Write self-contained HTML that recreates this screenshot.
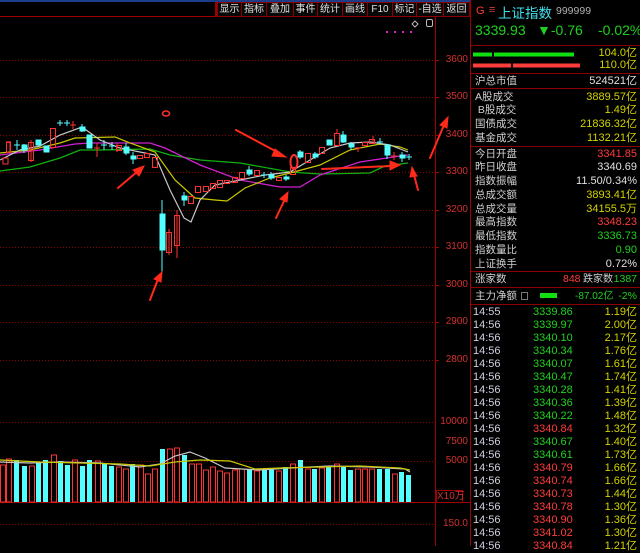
<!DOCTYPE html>
<html><head><meta charset="utf-8"><style>
*{margin:0;padding:0;box-sizing:border-box}
body{width:640px;height:546px;background:#000;overflow:hidden;position:relative;font-family:"Liberation Sans","Noto Sans CJK SC",sans-serif}
.ab{position:absolute;white-space:nowrap}
.btn{position:absolute;top:2px;height:15px;border:1px solid #8a0000;color:#e0e0e0;font-size:10px;line-height:13px;text-align:center;background:#080808}
.r{position:absolute;left:471px;width:169px;height:13px;font-size:11px;line-height:13px;color:#d0d0d0}
.r .l{position:absolute;left:4px;font-size:10.5px}
.r .v{position:absolute;right:3px}
.y{color:#d2d200}.rd{color:#ff3c3c}.g{color:#20d020}.w{color:#e0e0e0}
.ax{position:absolute;right:172px;font-size:10px;color:#d23030;line-height:10px}
.t{position:absolute;left:473px;width:167px;height:13px;font-size:11px;line-height:13px}
.t .a{position:absolute;left:0;color:#d0d0e0}
.t .b{position:absolute;left:60px}
.t .c{position:absolute;right:3px;color:#d2d200}
</style></head><body>
<div class="ab" style="left:0;top:0;width:470px;height:2px;background:#1c3c8c"></div>
<div class="ab" style="left:0;top:16px;width:470px;height:1px;background:#a00000"></div>
<div class="ab" style="left:215px;top:2px;width:2px;height:14px;background:#a00000"></div>
<div class="btn" style="left:217px;width:25px">显示</div>
<div class="btn" style="left:241px;width:26px">指标</div>
<div class="btn" style="left:266px;width:28px">叠加</div>
<div class="btn" style="left:293px;width:25px">事件</div>
<div class="btn" style="left:317px;width:26px">统计</div>
<div class="btn" style="left:342px;width:26px">画线</div>
<div class="btn" style="left:367px;width:26px">F10</div>
<div class="btn" style="left:392px;width:25px">标记</div>
<div class="btn" style="left:416px;width:28px">-自选</div>
<div class="btn" style="left:443px;width:27px">返回</div>

<svg class="ab" style="left:0;top:0" width="640" height="546">
<g stroke="#8a0000" stroke-dasharray="1,2" stroke-width="1">
<line x1="0" y1="60.5" x2="435" y2="60.5"/><line x1="0" y1="97.5" x2="435" y2="97.5"/>
<line x1="0" y1="135.5" x2="435" y2="135.5"/><line x1="0" y1="172.5" x2="435" y2="172.5"/>
<line x1="0" y1="210.5" x2="435" y2="210.5"/><line x1="0" y1="247.5" x2="435" y2="247.5"/>
<line x1="0" y1="285.5" x2="435" y2="285.5"/><line x1="0" y1="322.5" x2="435" y2="322.5"/>
<line x1="0" y1="360.5" x2="435" y2="360.5"/><line x1="0" y1="422.5" x2="435" y2="422.5"/>
<line x1="0" y1="461.5" x2="435" y2="461.5"/><line x1="0" y1="524.5" x2="435" y2="524.5"/>
</g>
<g stroke="#a00000" stroke-width="1">
<line x1="435.5" y1="17" x2="435.5" y2="546"/>
<line x1="470.5" y1="0" x2="470.5" y2="546"/>
<line x1="0" y1="502.5" x2="470" y2="502.5"/>
<line x1="435" y1="60.5" x2="439" y2="60.5"/><line x1="435" y1="97.5" x2="439" y2="97.5"/><line x1="435" y1="135.5" x2="439" y2="135.5"/><line x1="435" y1="172.5" x2="439" y2="172.5"/><line x1="435" y1="210.5" x2="439" y2="210.5"/><line x1="435" y1="247.5" x2="439" y2="247.5"/><line x1="435" y1="285.5" x2="439" y2="285.5"/><line x1="435" y1="322.5" x2="439" y2="322.5"/><line x1="435" y1="360.5" x2="439" y2="360.5"/>
</g>
<rect x="436.5" y="490.5" width="26" height="12" fill="none" stroke="#a00000"/>
<g stroke="#8a0000"><line x1="471" y1="45.5" x2="640" y2="45.5"/><line x1="471" y1="73.5" x2="640" y2="73.5"/><line x1="471" y1="88.5" x2="640" y2="88.5"/><line x1="471" y1="146.5" x2="640" y2="146.5"/><line x1="471" y1="271.5" x2="640" y2="271.5"/><line x1="471" y1="287.5" x2="640" y2="287.5"/><line x1="471" y1="304.5" x2="640" y2="304.5"/></g>
<rect x="473" y="52.5" width="19" height="4" fill="#10e010"/><rect x="494" y="52.5" width="80" height="4" fill="#10e010"/>
<rect x="473" y="63.5" width="38" height="4" fill="#ff3c3c"/><rect x="513" y="63.5" width="67" height="4" fill="#ff3c3c"/>
<rect x="540" y="293" width="17" height="5" fill="#10e010"/>
<rect x="521.5" y="292.5" width="6" height="7" fill="none" stroke="#777"/>

<g stroke="#ff3232" fill="none" stroke-width="1">
<rect x="0.5" y="465" width="5" height="37"/><rect x="6.5" y="459" width="5" height="43"/><rect x="29.5" y="466" width="5" height="36"/>
<rect x="51.5" y="455" width="5" height="47"/><rect x="72.5" y="460" width="5" height="42"/><rect x="95.5" y="461" width="5" height="41"/>
<rect x="116.5" y="467" width="5" height="35"/><rect x="123.5" y="469" width="5" height="33"/>
<rect x="138.5" y="465" width="5" height="37"/><rect x="145.5" y="474" width="5" height="28"/><rect x="152.5" y="469" width="5" height="33"/>
<rect x="167.5" y="449" width="5" height="53"/><rect x="174.5" y="448" width="5" height="54"/>
<rect x="189.5" y="464" width="5" height="38"/><rect x="196.5" y="464" width="5" height="38"/><rect x="203.5" y="470" width="5" height="32"/>
<rect x="210.5" y="467" width="5" height="35"/><rect x="217.5" y="471" width="5" height="31"/><rect x="224.5" y="473" width="5" height="29"/>
<rect x="232.5" y="470" width="5" height="32"/><rect x="239.5" y="469" width="5" height="33"/><rect x="254.5" y="471" width="5" height="31"/>
<rect x="276.5" y="471" width="5" height="31"/><rect x="290.5" y="464" width="5" height="38"/><rect x="305.5" y="469" width="5" height="33"/>
<rect x="319.5" y="468" width="5" height="34"/><rect x="334.5" y="464" width="5" height="38"/><rect x="355.5" y="469" width="5" height="33"/>
<rect x="362.5" y="469" width="5" height="33"/><rect x="369.5" y="469" width="5" height="33"/><rect x="392.5" y="474" width="5" height="28"/>
</g>
<g fill="#54ffff">
<rect x="14" y="460" width="5" height="42"/><rect x="22" y="466" width="5" height="36"/><rect x="36" y="462" width="5" height="40"/>
<rect x="43" y="460" width="5" height="42"/><rect x="58" y="461" width="5" height="41"/><rect x="65" y="465" width="5" height="37"/>
<rect x="80" y="466" width="5" height="36"/><rect x="87" y="460" width="5" height="42"/><rect x="102" y="464" width="5" height="38"/>
<rect x="109" y="466" width="5" height="36"/><rect x="130" y="464" width="5" height="38"/>
<rect x="160" y="449" width="5" height="53"/><rect x="182" y="455" width="5" height="47"/>
<rect x="247" y="469" width="5" height="33"/><rect x="262" y="469" width="5" height="33"/><rect x="269" y="469" width="5" height="33"/>
<rect x="283" y="467" width="5" height="35"/><rect x="298" y="460" width="5" height="42"/><rect x="312" y="469" width="5" height="33"/>
<rect x="326" y="467" width="5" height="35"/><rect x="341" y="467" width="5" height="35"/><rect x="348" y="470" width="5" height="32"/>
<rect x="377" y="469" width="5" height="33"/><rect x="385" y="469" width="5" height="33"/><rect x="399" y="472" width="5" height="30"/>
<rect x="406" y="475" width="5" height="27"/>
</g>
<polyline fill="none" stroke="#c8c8c8" stroke-width="1.2" points="0,462 30,463 60,462 100,463 140,467 160,464 175,456 190,452 205,458 225,468 260,470 290,468 330,466 370,467 405,469 410,472"/>
<polyline fill="none" stroke="#c8c800" stroke-width="1.2" points="0,460 40,462 80,463 120,464 150,466 175,462 200,460 230,461 255,469 280,468 320,467 360,466 400,468 410,470"/>

<polyline fill="none" stroke="#10b010" stroke-width="1.3" points="0,171 30,167 60,158 80,150 100,150 150,149 170,155 200,160 240,163 290,172 320,174 370,173 385,166 408,163"/>
<polyline fill="none" stroke="#d020d0" stroke-width="1.3" points="0,155 40,150 75,144 90,143 150,143 165,148 200,165 240,180 280,187 300,187 320,175 360,162 400,156 408,155"/>
<polyline fill="none" stroke="#c8c800" stroke-width="1.2" points="0,153 30,150 60,143 75,138 115,137 130,143 155,152 175,180 195,198 215,200 227,201 245,188 270,178 290,173 320,165 350,150 380,144 400,147 408,150"/>
<polyline fill="none" stroke="#c8c8c8" stroke-width="1.2" points="0,160 20,150 40,146 60,135 82,127 100,140 120,148 140,152 155,155 170,190 184,218 191,222 200,200 215,185 240,180 265,175 290,172 310,160 330,148 350,143 370,142 390,145 408,152"/>

<g stroke="#ff3232" fill="none" stroke-width="1">
<path d="M3 158h5v6h-5z M10 141v12 M6 142h4 M31 140v22"/>
<rect x="6.5" y="142.5" width="4" height="10"/><rect x="28.5" y="142.5" width="5" height="18"/>
<rect x="50.5" y="128.5" width="5" height="19"/><path d="M73 121v8 M70 125h6 M97 143v14 M94 148h6 M117 143v9"/>
<rect x="116.5" y="145.5" width="5" height="5"/><rect x="137.5" y="155.5" width="5" height="3"/><rect x="144.5" y="153.5" width="5" height="4"/>
<rect x="152.5" y="157.5" width="5" height="10"/><rect x="166.5" y="232.5" width="5" height="20"/><path d="M169 229v26 M177 210v48"/>
<rect x="174.5" y="215.5" width="5" height="30"/><rect x="188.5" y="196.5" width="5" height="7"/><rect x="195.5" y="186.5" width="5" height="6"/>
<rect x="203.5" y="186.5" width="5" height="5"/><rect x="210.5" y="183.5" width="5" height="5"/><rect x="217.5" y="180.5" width="5" height="7"/>
<rect x="224.5" y="180.5" width="5" height="3"/><rect x="232.5" y="177.5" width="5" height="5"/><rect x="239.5" y="172.5" width="5" height="6"/>
<rect x="254.5" y="170.5" width="5" height="5"/><rect x="276.5" y="177.5" width="5" height="3"/><rect x="290.5" y="167.5" width="5" height="7"/>
<rect x="305.5" y="153.5" width="5" height="9"/><rect x="319.5" y="147.5" width="5" height="6"/><rect x="334.5" y="133.5" width="5" height="12"/>
<path d="M337 129v5 M358 147v5 M355 148h6 M373 136v8 M394 152v8 M391 156h6"/>
<rect x="362.5" y="142.5" width="5" height="3"/><rect x="369.5" y="139.5" width="5" height="4"/>
</g>
<g fill="#54ffff" stroke="#54ffff" stroke-width="1">
<path d="M17 140v10 M14 145h6 M24 144v9 M60 120v6 M57 123h6 M67 120v6 M64 123h6 M82 124v8 M104 140v10 M101 145h6 M112 142v8 M109 146h6 M126 143v12 M133 152v12 M162 200v72 M184 192v14 M249 166v10 M264 172v6 M261 175h6 M271 172v8 M286 175v6 M300 150v9 M315 152v7 M343 131v12 M351 142v8 M380 138v7 M377 142h6 M387 145v14 M402 152v10 M409 154v6 M406 157h6"/>
<rect x="22" y="145" width="5" height="5"/><rect x="36" y="140" width="5" height="5"/><rect x="44" y="146" width="5" height="6"/>
<rect x="80" y="127" width="5" height="4"/><rect x="87" y="135" width="5" height="13"/><rect x="124" y="147" width="5" height="6"/>
<rect x="131" y="156" width="5" height="3"/><rect x="160" y="214" width="5" height="36"/><rect x="182" y="196" width="5" height="4"/>
<rect x="247" y="170" width="5" height="4"/><rect x="269" y="175" width="5" height="3"/><rect x="284" y="177" width="5" height="2"/>
<rect x="298" y="152" width="5" height="5"/><rect x="313" y="154" width="5" height="3"/><rect x="327" y="140" width="5" height="5"/>
<rect x="341" y="135" width="5" height="7"/><rect x="349" y="144" width="5" height="3"/><rect x="385" y="145" width="5" height="10"/>
<rect x="400" y="155" width="5" height="3"/>
</g>
<ellipse cx="166" cy="113.5" rx="3.5" ry="2.5" fill="none" stroke="#ff3030" stroke-width="1.5"/>
<ellipse cx="294" cy="162" rx="3.5" ry="7" fill="none" stroke="#ff3030" stroke-width="2"/>
<g fill="#ff2a1a" stroke="#ff2a1a" stroke-width="2" stroke-linecap="round">
<line x1="118" y1="188" x2="138" y2="171"/><polygon points="144,166 133,170 139,176" stroke-width="1"/>
<line x1="236" y1="130" x2="279" y2="153"/><polygon points="286,157 275,149 272,156" stroke-width="1"/>
<line x1="276" y1="218" x2="285" y2="199"/><polygon points="288,192 280,199 287,202" stroke-width="1"/>
<line x1="150" y1="300" x2="158" y2="279"/><polygon points="162,272 154,279 161,282" stroke-width="1"/>
<line x1="322" y1="169" x2="392" y2="166"/><polygon points="400,165 390,161 390,170" stroke-width="1"/>
<line x1="418" y1="190" x2="414" y2="175"/><polygon points="412,167 410,177 417,176" stroke-width="1"/>
<line x1="430" y1="158" x2="444" y2="125"/><polygon points="448,117 440,125 447,128" stroke-width="1"/>
</g>
<g fill="#e020e0"><rect x="386" y="31" width="2" height="2"/><rect x="394" y="31" width="2" height="2"/><rect x="402" y="31" width="2" height="2"/><rect x="410" y="31" width="2" height="2"/></g>
<path d="M415 21l3 3-3 3-3-3z" fill="none" stroke="#bbb"/>
<rect x="426.5" y="19.5" width="6" height="7" rx="1.5" fill="none" stroke="#bbb"/>
</svg>

<div class="ax" style="top:55px">3600</div><div class="ax" style="top:92px">3500</div><div class="ax" style="top:130px">3400</div>
<div class="ax" style="top:167px">3300</div><div class="ax" style="top:205px">3200</div><div class="ax" style="top:242px">3100</div>
<div class="ax" style="top:280px">3000</div><div class="ax" style="top:317px">2900</div><div class="ax" style="top:355px">2800</div>
<div class="ax" style="top:417px">10000</div><div class="ax" style="top:437px">7500</div><div class="ax" style="top:456px">5000</div>
<div class="ax" style="top:519px">150.0</div>
<div class="ab" style="left:437px;top:491px;font-size:10px;color:#d23030;line-height:11px">X10万</div>

<div class="ab" style="left:476px;top:5px;font-size:11px;color:#ff3c3c">G</div>
<div class="ab" style="left:489px;top:4px;font-size:11px;color:#cc4040">≡</div>
<div class="ab" style="left:498px;top:2px;font-size:13.5px;color:#40e0f0">上证指数</div>
<div class="ab" style="left:556px;top:5px;font-size:10.5px;color:#b0b0b0">999999</div>
<div class="ab" style="left:475px;top:22px;font-size:14px;color:#20d020">3339.93</div>
<div class="ab" style="left:537px;top:22px;font-size:14px;color:#20d020">▼-0.76</div>
<div class="ab" style="left:598px;top:22px;font-size:14px;color:#20d020">-0.02%</div>
<div class="r" style="top:47px"><span class="v y">104.0亿</span></div>
<div class="r" style="top:59px"><span class="v y">110.0亿</span></div>
<div class="r" style="top:75px"><span class="l">沪总市值</span><span class="v w">524521亿</span></div>
<div class="r" style="top:91px"><span class="l">A股成交</span><span class="v y">3889.57亿</span></div>
<div class="r" style="top:104px"><span class="l">&nbsp;B股成交</span><span class="v y">1.49亿</span></div>
<div class="r" style="top:118px"><span class="l">国债成交</span><span class="v y">21836.32亿</span></div>
<div class="r" style="top:132px"><span class="l">基金成交</span><span class="v y">1132.21亿</span></div>
<div class="r" style="top:148px"><span class="l">今日开盘</span><span class="v rd">3341.85</span></div>
<div class="r" style="top:161px"><span class="l">昨日收盘</span><span class="v w">3340.69</span></div>
<div class="r" style="top:175px"><span class="l">指数振幅</span><span class="v w">11.50/0.34%</span></div>
<div class="r" style="top:189px"><span class="l">总成交额</span><span class="v y">3893.41亿</span></div>
<div class="r" style="top:203px"><span class="l">总成交量</span><span class="v y">34155.5万</span></div>
<div class="r" style="top:216px"><span class="l">最高指数</span><span class="v rd">3348.23</span></div>
<div class="r" style="top:230px"><span class="l">最低指数</span><span class="v g">3336.73</span></div>
<div class="r" style="top:244px"><span class="l">指数量比</span><span class="v g">0.90</span></div>
<div class="r" style="top:258px"><span class="l">上证换手</span><span class="v w">0.72%</span></div>
<div class="r" style="top:273px"><span class="l">涨家数</span><span style="position:absolute;left:92px;color:#ff3c3c;font-size:10.5px">848</span><span style="position:absolute;left:112px;font-size:10px">跌家数</span><span class="v g" style="font-size:10.5px">1387</span></div>
<div class="r" style="top:290px"><span class="l">主力净额</span><span style="position:absolute;left:104px;font-size:10px" class="g">-87.02亿</span><span class="v g" style="font-size:10.5px">-2%</span></div>

<div class="t" style="top:306px"><span class="a">14:55</span><span class="b g">3339.86</span><span class="c">1.19亿</span></div>
<div class="t" style="top:319px"><span class="a">14:56</span><span class="b g">3339.97</span><span class="c">2.00亿</span></div>
<div class="t" style="top:332px"><span class="a">14:56</span><span class="b g">3340.10</span><span class="c">2.17亿</span></div>
<div class="t" style="top:345px"><span class="a">14:56</span><span class="b g">3340.34</span><span class="c">1.76亿</span></div>
<div class="t" style="top:358px"><span class="a">14:56</span><span class="b g">3340.07</span><span class="c">1.61亿</span></div>
<div class="t" style="top:371px"><span class="a">14:56</span><span class="b g">3340.47</span><span class="c">1.74亿</span></div>
<div class="t" style="top:384px"><span class="a">14:56</span><span class="b g">3340.28</span><span class="c">1.41亿</span></div>
<div class="t" style="top:397px"><span class="a">14:56</span><span class="b g">3340.36</span><span class="c">1.39亿</span></div>
<div class="t" style="top:410px"><span class="a">14:56</span><span class="b g">3340.22</span><span class="c">1.48亿</span></div>
<div class="t" style="top:423px"><span class="a">14:56</span><span class="b rd">3340.84</span><span class="c">1.32亿</span></div>
<div class="t" style="top:436px"><span class="a">14:56</span><span class="b g">3340.67</span><span class="c">1.40亿</span></div>
<div class="t" style="top:449px"><span class="a">14:56</span><span class="b g">3340.61</span><span class="c">1.73亿</span></div>
<div class="t" style="top:462px"><span class="a">14:56</span><span class="b rd">3340.79</span><span class="c">1.66亿</span></div>
<div class="t" style="top:475px"><span class="a">14:56</span><span class="b rd">3340.74</span><span class="c">1.66亿</span></div>
<div class="t" style="top:488px"><span class="a">14:56</span><span class="b rd">3340.73</span><span class="c">1.44亿</span></div>
<div class="t" style="top:501px"><span class="a">14:56</span><span class="b rd">3340.78</span><span class="c">1.30亿</span></div>
<div class="t" style="top:514px"><span class="a">14:56</span><span class="b rd">3340.90</span><span class="c">1.36亿</span></div>
<div class="t" style="top:527px"><span class="a">14:56</span><span class="b rd">3341.02</span><span class="c">1.30亿</span></div>
<div class="t" style="top:540px"><span class="a">14:56</span><span class="b rd">3340.84</span><span class="c">1.21亿</span></div>
</body></html>
